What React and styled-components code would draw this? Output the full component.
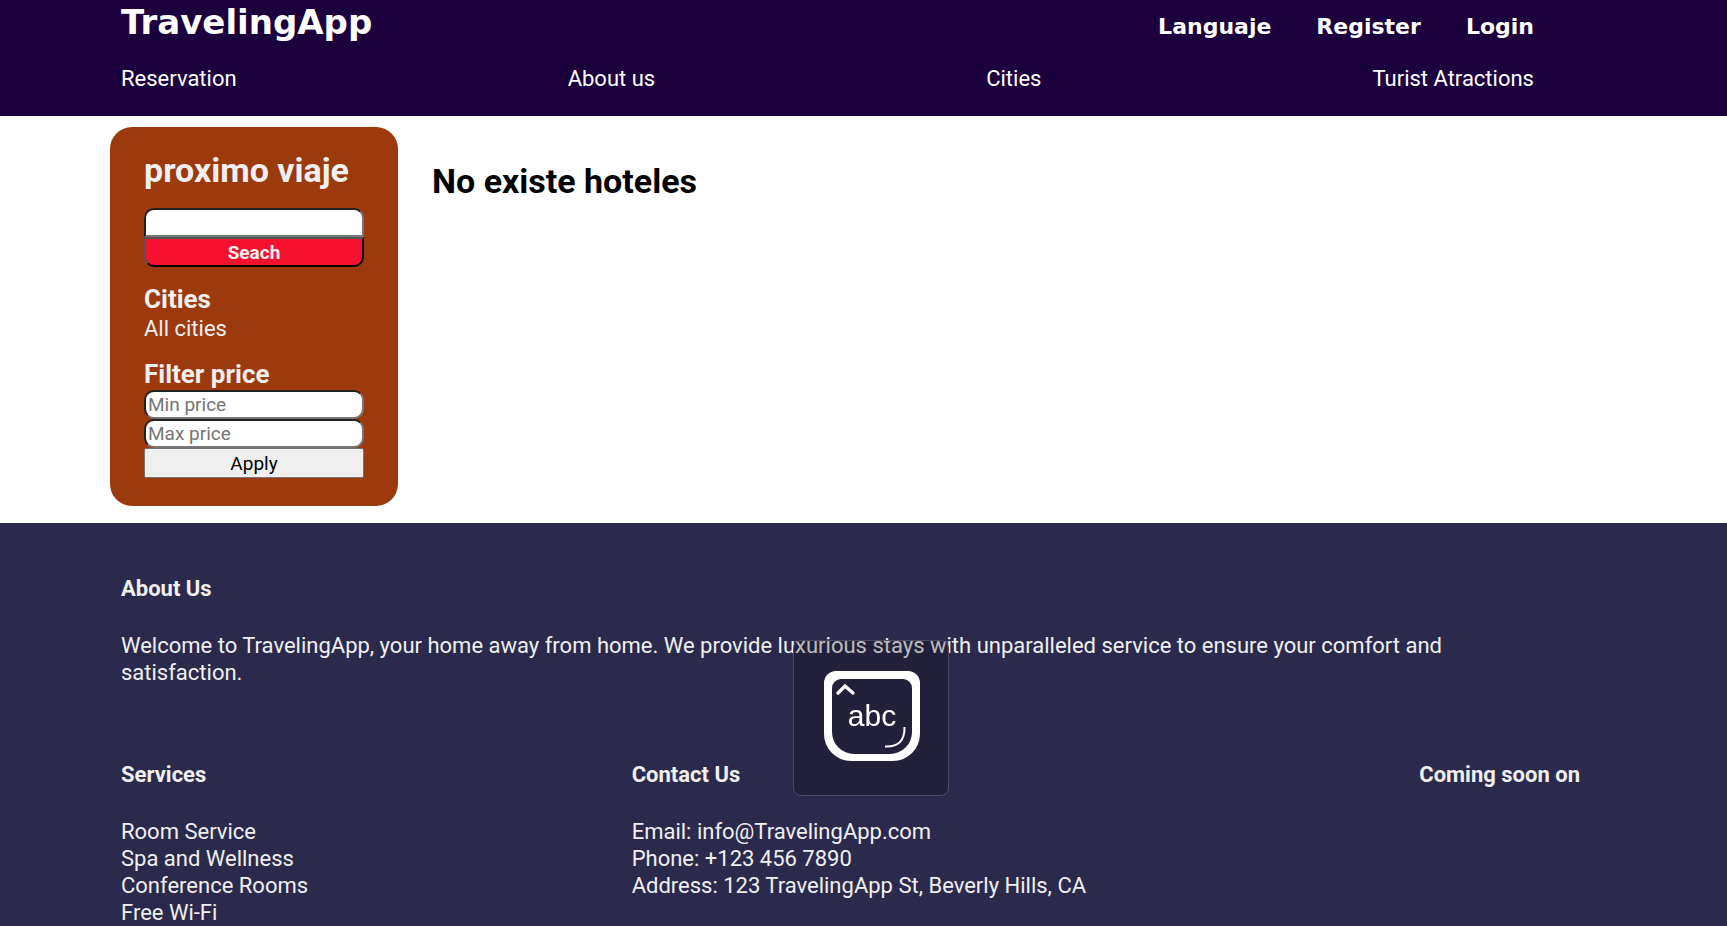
import React from "react";
import styled, { createGlobalStyle, css } from "styled-components";

const GlobalStyle = createGlobalStyle`
  * { box-sizing: border-box; margin: 0; padding: 0; }
  html { scrollbar-width: none; }
  body { background: #fff; color: #000; font: 22px/27px Roboto, "Open Sans", sans-serif; }
  a { color: inherit; text-decoration: none; }
  ul { list-style: none; }
`;

const Header = styled.header`
  background: #1c003e;
  color: #fff;
  padding: 0 193px 24px 121px;
`;
const TopBar = styled.div`
  display: flex;
  justify-content: space-between;
  align-items: baseline;
  height: 48px;
  font-family: "DejaVu Sans", sans-serif;
  font-weight: 700;
`;
const Brand = styled.h1`
  font-size: 34px;
  line-height: 44px;
`;
const AccountNav = styled.nav`
  display: flex;
  gap: 45px;
`;
const MainNav = styled.nav`
  display: flex;
  justify-content: space-between;
  padding-top: 17px;
`;
const Main = styled.main`
  display: flex;
  align-items: flex-start;
  gap: 34px;
  padding: 11px 110px 17px;
`;
const Sidebar = styled.aside`
  width: 288px;
  padding: 23px 34px 28px;
  border-radius: 22px;
  background: #9c390d;
  color: #f0f0f0;
`;
const SidebarTitle = styled.h2`
  font-size: 34px;
  line-height: 40px;
  margin-bottom: 18px;
`;
const SectionTitle = styled.h3`
  font-size: 26px;
  line-height: 31px;
  margin-top: 17px;
`;
const Form = styled.form`
  display: grid;
`;
const control = css`
  display: block;
  width: 100%;
  font-family: inherit;
  font-size: 19px;
`;
const TextField = styled.input`
  ${control}
  height: 29px;
  padding: 1px 2px;
  border: 2px inset #767676;
  border-radius: ${(p) => (p.$joined ? "10px 10px 0 0" : "10px")};
`;
const Button = styled.button`
  ${control}
  height: 30px;
  border: 1px solid #767676;
  border-radius: 2px;
  background: #efefef;
  color: #000;
`;
const SearchButton = styled(Button)`
  border: 2px outset #000;
  border-radius: 0 0 10px 10px;
  background: #f5112e;
  color: #f0f0f0;
  font-weight: 700;
`;
const EmptyMessage = styled.h2`
  font-size: 34px;
  line-height: 40px;
  padding-top: 34px;
`;
const Footer = styled.footer`
  background: #2c2a4c;
  color: #f0f0f0;
  padding: 52px 147px 52px 121px;
`;
const FooterTitle = styled.h4`
  font-size: 22px;
  line-height: 27px;
  margin-bottom: 30px;
`;
const AboutText = styled.p`
  padding-right: 48px;
`;
const FooterColumns = styled.div`
  display: grid;
  grid-template-columns: 35% 1fr auto;
  padding-top: 75px;
`;
const KeyboardHint = styled.div`
  position: fixed;
  left: 50%;
  bottom: 130px;
  width: 156px;
  height: 156px;
  margin-left: -71px;
  padding: 0 0 4px 2px;
  display: grid;
  place-items: center;
  border: 1px solid #4b4a63;
  border-radius: 8px;
  background: rgba(0, 0, 0, 0.22);
`;

const KeyIcon = () => (
  <svg width="96" height="90" viewBox="0 0 96 90" fill="none" role="img" aria-label="abc">
    <path
      fill="#fff"
      fillRule="evenodd"
      d="M12 0H84A12 12 0 0 1 96 12V63A27 27 0 0 1 69 90H27A27 27 0 0 1 0 63V12A12 12 0 0 1 12 0ZM17 8A9 9 0 0 0 8 17V61A22 22 0 0 0 30 83H66A22 22 0 0 0 88 61V17A9 9 0 0 0 79 8Z"
    />
    <path d="M14 22L21 15L29 22" stroke="#fff" strokeWidth="3.4" strokeLinecap="round" />
    <path d="M61 75.5Q81 76.5 80.5 56" stroke="#fff" strokeWidth="2" />
    <text x="48" y="55" fill="#fff" fontSize="30" textAnchor="middle" fontFamily="Liberation Sans, sans-serif">
      abc
    </text>
  </svg>
);

export default function App() {
  return (
    <>
      <GlobalStyle />
      <Header>
        <TopBar>
          <Brand>TravelingApp</Brand>
          <AccountNav>
            <a href="#language">Languaje</a>
            <a href="#register">Register</a>
            <a href="#login">Login</a>
          </AccountNav>
        </TopBar>
        <MainNav>
          <a href="#reservation">Reservation</a>
          <a href="#about">About us</a>
          <a href="#cities">Cities</a>
          <a href="#attractions">Turist Atractions</a>
        </MainNav>
      </Header>
      <Main>
        <Sidebar>
          <SidebarTitle>proximo viaje</SidebarTitle>
          <Form>
            <TextField $joined type="text" aria-label="proximo viaje" />
            <SearchButton type="button">Seach</SearchButton>
          </Form>
          <SectionTitle>Cities</SectionTitle>
          <p>All cities</p>
          <SectionTitle>Filter price</SectionTitle>
          <Form>
            <TextField type="text" placeholder="Min price" aria-label="Min price" />
            <TextField type="text" placeholder="Max price" aria-label="Max price" />
            <Button type="button">Apply</Button>
          </Form>
        </Sidebar>
        <EmptyMessage>No existe hoteles</EmptyMessage>
      </Main>
      <Footer>
        <FooterTitle id="about">About Us</FooterTitle>
        <AboutText>
          Welcome to TravelingApp, your home away from home. We provide luxurious stays with
          unparalleled service to ensure your comfort and satisfaction.
        </AboutText>
        <FooterColumns>
          <section>
            <FooterTitle>Services</FooterTitle>
            <ul>
              <li>Room Service</li>
              <li>Spa and Wellness</li>
              <li>Conference Rooms</li>
              <li>Free Wi-Fi</li>
            </ul>
          </section>
          <section>
            <FooterTitle>Contact Us</FooterTitle>
            <p>Email: info@TravelingApp.com</p>
            <p>Phone: +123 456 7890</p>
            <p>Address: 123 TravelingApp St, Beverly Hills, CA</p>
          </section>
          <section>
            <FooterTitle>Coming soon on</FooterTitle>
          </section>
        </FooterColumns>
      </Footer>
      <KeyboardHint>
        <KeyIcon />
      </KeyboardHint>
    </>
  );
}
